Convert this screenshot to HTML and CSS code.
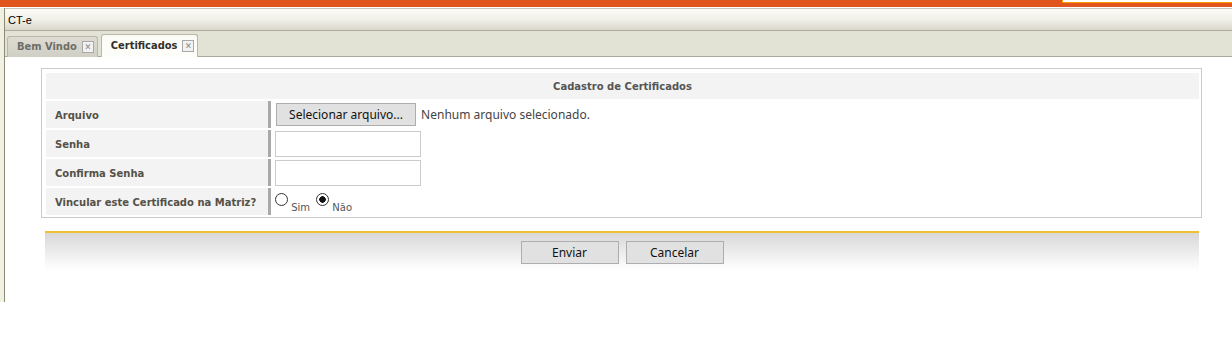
FILE: index.html
```html
<!DOCTYPE html>
<html lang="pt-BR">
<head>
    <meta charset="UTF-8">
    <title>CT-e - Certificados</title>
    <link rel="stylesheet" href="styles.css">
</head>
<body>

    <div class="topbar">
        <div class="topbar-box"></div>
    </div>

    <div class="panel">
        <div class="panel-title">CT-e</div>

        <div class="tabs">
            <div class="tab">
                Bem Vindo <span class="tab-close">&#x2715;</span>
            </div>
            <div class="tab active">
                Certificados <span class="tab-close">&#x2715;</span>
            </div>
        </div>

        <div class="content">
            <div class="form-box">
                <table class="form-table">
                    <tr>
                        <th colspan="2">Cadastro de Certificados</th>
                    </tr>
                    <tr>
                        <td class="label">Arquivo</td>
                        <td class="field">
                            <button class="btn btn-file">Selecionar arquivo...</button>
                            <span class="file-name">Nenhum arquivo selecionado.</span>
                        </td>
                    </tr>
                    <tr>
                        <td class="label">Senha</td>
                        <td class="field"><input type="password" class="text-input"></td>
                    </tr>
                    <tr>
                        <td class="label">Confirma Senha</td>
                        <td class="field"><input type="password" class="text-input"></td>
                    </tr>
                    <tr>
                        <td class="label">Vincular este Certificado na Matriz?</td>
                        <td class="field">
                            <label class="radio"><input type="radio" name="matriz"> <span>Sim</span></label>
                            <label class="radio"><input type="radio" name="matriz" checked> <span>Não</span></label>
                        </td>
                    </tr>
                </table>
            </div>

            <!-- barra de botões -->
            <div class="button-bar">
                <button class="btn">Enviar</button>
                <button class="btn">Cancelar</button>
            </div>
        </div>
    </div>

</body>
</html>
```

FILE: styles.css
```css
body {
    margin: 0;
    padding: 0;
    font-family: "DejaVu Sans", Verdana, sans-serif;
    background: #fff;
}

.topbar {
    height: 7px;
    background: #e0541e;
    display: flex;
    justify-content: flex-end;
}

.topbar-box {
    width: 169px;
    height: 2px;
    background: #fff;
    border-left: 1px solid #ff9d00;
    border-bottom: 1px solid #ff9d00;
}

.panel {
    margin-top: 1px;
    height: 294px;
    border-left: 1px solid #8c8c74;
    margin-left: 4px;
    position: relative;
}

.panel::before {
    content: "";
    position: absolute;
    left: -5px;
    top: 0;
    width: 4px;
    height: 100%;
    background: #f1f1e3;
}

.panel-title {
    height: 21px;
    line-height: 22px;
    padding-left: 3px;
    font-family: "Liberation Sans", Arial, sans-serif;
    font-size: 11px;
    color: #000;
    background: linear-gradient(#fcfbf6, #f1f0e8 50%, #d9d7cb);
    border-top: 1px solid #c9c7bd;
    border-bottom: 1px solid #aeab9c;
}

.tabs {
    height: 23px;
    padding: 2px 0 0 2px;
    background: #e2e3d5;
    border-bottom: 1px solid #a9a99c;
    display: flex;
    align-items: flex-end;
    gap: 3px;
}

.tab {
    height: 19px;
    padding: 0 3px 1px 9px;
    display: flex;
    align-items: center;
    gap: 5px;
    font-family: "DejaVu Sans Condensed", "DejaVu Sans", sans-serif;
    font-size: 11px;
    font-weight: bold;
    color: #6d6d68;
    background: linear-gradient(#dedcd2, #d0cfc5);
    border: 1px solid #b8b7a8;
    border-bottom: none;
    border-radius: 3px 3px 0 0;
    margin-bottom: -1px;
}

.tab.active {
    height: 21px;
    color: #33302a;
    background: linear-gradient(#fbfbf6, #fdfdfa);
}

.tab-close {
    width: 10px;
    height: 10px;
    border: 1px solid #a8a8a8;
    background: #f2f2f2;
    font-size: 9px;
    line-height: 10px;
    text-align: center;
    color: #888;
    font-weight: normal;
}

.content {
    padding: 11px 0 0 36px;
}

.form-box {
    width: 1153px;
    border: 1px solid #cbcbcb;
    padding: 2px 2px 0 4px;
}

.form-table {
    width: 100%;
    border-collapse: separate;
    border-spacing: 0 2px;
}

.form-table th {
    height: 26px;
    padding: 0;
    background: #f3f3f3;
    font-size: 10px;
    font-weight: bold;
    color: #555;
    text-align: center;
}

.form-table td {
    height: 27px;
    padding: 0;
    box-sizing: border-box;
}

.form-table .label {
    width: 225px;
    padding-left: 9px;
    padding-top: 2px;
    background: #f3f3f3;
    border-right: 3px solid #a9a9a9;
    font-size: 10px;
    font-weight: bold;
    color: #555147;
    vertical-align: middle;
}

.form-table .field {
    padding-left: 3px;
    vertical-align: middle;
}

.btn {
    font-family: "Noto Sans", "Open Sans", sans-serif;
    font-size: 12px;
    color: #111;
    background: #e1e1e1;
    border: 1px solid #adadad;
    padding: 0;
    height: 23px;
}

.btn-file {
    width: 140px;
    margin-left: 2px;
}

.file-name {
    font-family: "Noto Sans", "Open Sans", sans-serif;
    font-size: 12px;
    color: #444;
}

.text-input {
    display: block;
    width: 146px;
    height: 26px;
    border: 1px solid #cbcbcb;
    padding: 0;
    margin: 0 0 0 1px;
    box-sizing: border-box;
}

.radio {
    font-size: 10px;
    color: #555;
}

.radio input {
    appearance: none;
    box-sizing: border-box;
    margin: 0 0 0 1px;
    width: 13px;
    height: 13px;
    border: 1px solid #333;
    border-radius: 50%;
    background: #fff;
    vertical-align: -1px;
}

.radio input:checked {
    background: radial-gradient(circle, #111 0, #111 3px, #fff 3.5px);
}

.radio span {
    vertical-align: -6px;
}

.button-bar {
    width: 1154px;
    margin: 13px 0 0 4px;
    height: 40px;
    border-top: 2px solid #f0c233;
    background: linear-gradient(#d8d8d8, #f6f6f6 75%, #fff);
    display: flex;
    justify-content: center;
    gap: 7px;
    padding-top: 8px;
    box-sizing: border-box;
}

.button-bar .btn {
    width: 98px;
}
```
